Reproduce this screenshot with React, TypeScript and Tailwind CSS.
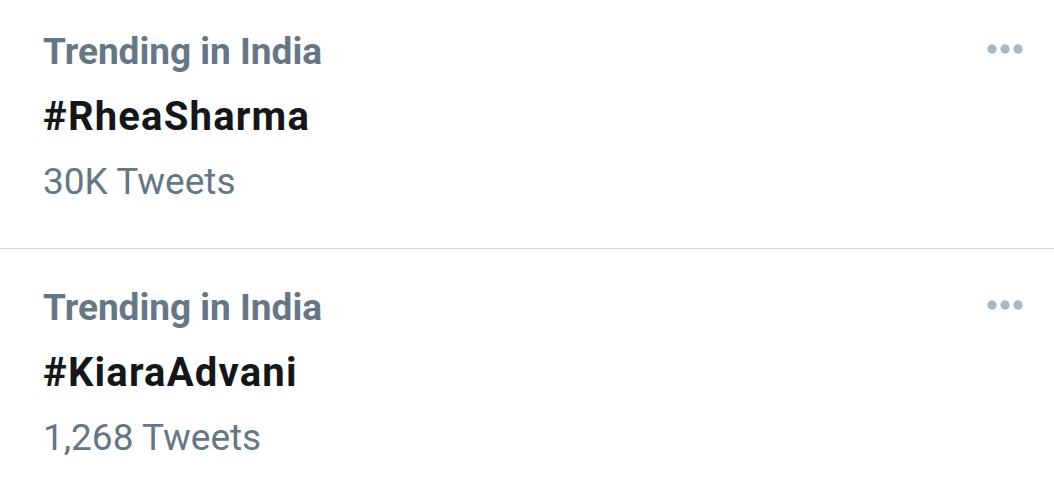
const trends = [
  { place: "Trending in India", tag: "#RheaSharma", count: "30K Tweets" },
  { place: "Trending in India", tag: "#KiaraAdvani", count: "1,268 Tweets" },
];

function MoreDots() {
  return (
    <svg className="h-[10px] w-[36px]" viewBox="0 0 36 10" fill="#aab8c2">
      <circle cx="5" cy="5" r="4.7" />
      <circle cx="18" cy="5" r="4.7" />
      <circle cx="31" cy="5" r="4.7" />
    </svg>
  );
}

function TrendRow({ place, tag, count, first }: { place: string; tag: string; count: string; first?: boolean }) {
  return (
    <div
      className={`flex items-start justify-between pl-[43px] pr-[31px] pb-[44px] ${
        first ? "pt-[30px]" : "border-t border-[#d6dbdd] pt-[37px]"
      }`}
    >
      <div className="flex flex-col">
        <span className="text-[37px] font-bold leading-[44px] text-[#657786]">{place}</span>
        <span className="mt-[19px] text-[40px] font-bold leading-[48px] tracking-[1.2px] text-[#14171a]">{tag}</span>
        <span className="mt-[19px] text-[37px] leading-[44px] text-[#657786]">{count}</span>
      </div>
      <div className="pt-[14px]">
        <MoreDots />
      </div>
    </div>
  );
}

export default function App() {
  return (
    <main className="min-h-screen bg-white" style={{ fontFamily: "Roboto, 'Noto Sans', sans-serif" }}>
      {trends.map((t, i) => (
        <TrendRow key={t.tag} {...t} first={i === 0} />
      ))}
    </main>
  );
}
